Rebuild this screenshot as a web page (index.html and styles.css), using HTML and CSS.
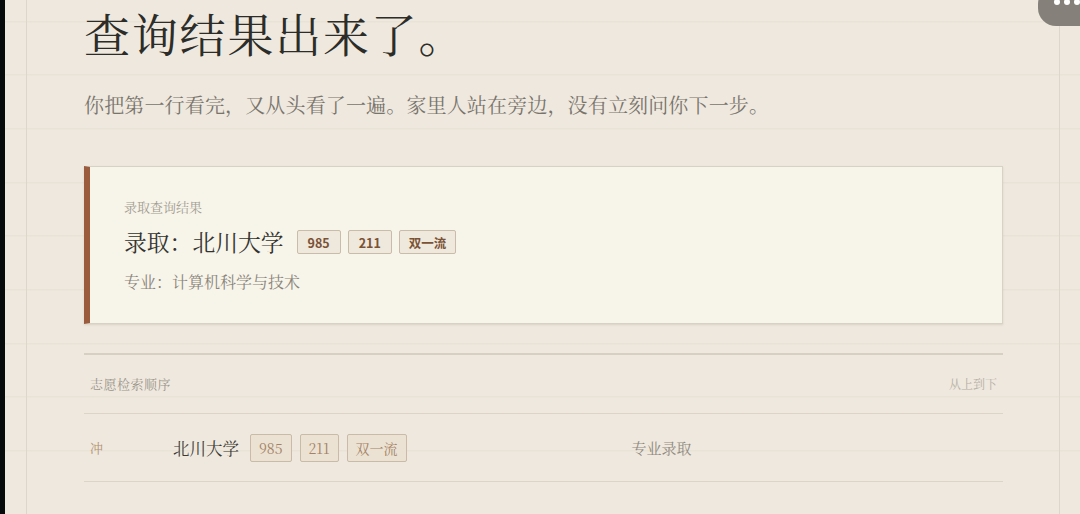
FILE: index.html
```html
<!DOCTYPE html>
<html lang="zh-CN">
<head>
<meta charset="utf-8">
<title>查询结果</title>
<link rel="stylesheet" href="styles.css">
</head>
<body>
<div class="capsule"><span class="dot"></span><span class="dot"></span><span class="dot"></span></div>
<main class="page">
  <h1 class="title">查询结果出来了。</h1>
  <p class="lead">你把第一行看完，又从头看了一遍。家里人站在旁边，没有立刻问你下一步。</p>

  <section class="card">
    <div class="card-label">录取查询结果</div>
    <div class="card-title">
      <span class="card-school">录取：北川大学</span>
      <span class="tag tag-bold">985</span>
      <span class="tag tag-bold">211</span>
      <span class="tag tag-bold">双一流</span>
    </div>
    <div class="card-major">专业：计算机科学与技术</div>
  </section>

  <section class="list">
    <div class="list-head">
      <span class="list-title">志愿检索顺序</span>
      <span class="list-note">从上到下</span>
    </div>
    <div class="list-row">
      <span class="row-level">冲</span>
      <span class="row-school">北川大学</span>
      <span class="tag tag-light">985</span>
      <span class="tag tag-light">211</span>
      <span class="tag tag-light">双一流</span>
      <span class="row-result">专业录取</span>
    </div>
  </section>
</main>
</body>
</html>
```

FILE: styles.css
```css
html, body {
  margin: 0;
  padding: 0;
}
body {
  width: 1080px;
  height: 514px;
  overflow: hidden;
  position: relative;
  font-family: "Noto Serif CJK SC", "Source Han Serif SC", "Noto Sans CJK SC", serif;
  color: #2f2f2a;
  background-color: #efe8de;
  background-image:
    linear-gradient(to right, #060a0a 0, #060a0a 5px, transparent 5px),
    linear-gradient(to right, transparent 26px, #ddd6ca 26px, #ddd6ca 27px, transparent 27px),
    linear-gradient(to right, transparent 1059px, #ddd6ca 1059px, #ddd6ca 1060px, transparent 1060px),
    repeating-linear-gradient(to bottom, transparent 0, transparent 52.67px, #e6dfd3 52.67px, #e6dfd3 53.67px);
  background-position: 0 0, 0 0, 0 0, 0 -31.67px;
}
.capsule {
  position: absolute;
  top: -14px;
  right: -22px;
  width: 64px;
  height: 40px;
  border-radius: 18px;
  background: #85817a;
  display: flex;
  align-items: flex-end;
  gap: 4px;
  padding: 0 0 21px 16px;
  box-sizing: border-box;
}
.capsule .dot {
  width: 6px;
  height: 6px;
  border-radius: 50%;
  background: #ffffff;
}
.page {
  margin-left: 84px;
  width: 919px;
}
.title {
  margin: 0;
  padding-top: 4px;
  font-size: 46px;
  line-height: 56px;
  font-weight: 400;
  color: #2c2d28;
  letter-spacing: 1.8px;
}
.lead {
  margin: 30px 0 0;
  font-size: 20px;
  line-height: 30px;
  color: #78746c;
  letter-spacing: 0.15px;
}
.card {
  margin-top: 46px;
  background: #f7f4ea;
  border: 1px solid #d6d2c6;
  border-left: 6px solid #9b5b3d;
  box-shadow: 0 1px 2px rgba(120, 110, 90, 0.18);
  padding: 30px 0 30px 34px;
}
.card-label {
  font-size: 13px;
  line-height: 20px;
  color: #a29c90;
}
.card-title {
  margin-top: 13px;
  display: flex;
  align-items: center;
  gap: 7px;
  height: 24px;
}
.card-school {
  font-size: 22.8px;
  line-height: 24px;
  color: #33332e;
  margin-right: 6px;
}
.tag {
  display: inline-flex;
  align-items: center;
  justify-content: center;
  box-sizing: border-box;
  border-radius: 2px;
}
.tag-bold {
  height: 24px;
  padding: 0 10px;
  font-family: "Noto Sans CJK SC", "Open Sans", sans-serif;
  font-weight: 700;
  font-size: 12.5px;
  color: #7a5236;
  background: #efe8dc;
  border: 1px solid #cbbca9;
}
.tag-bold:last-child {
  padding: 0 9px;
}
.card-major {
  margin-top: 17px;
  font-size: 16px;
  line-height: 22px;
  color: #8a857b;
}
.list {
  margin-top: 29px;
  border-top: 2px solid #d7cfc2;
}
.list-head {
  display: flex;
  justify-content: space-between;
  align-items: center;
  height: 59px;
  padding: 0 6px 1px;
  box-sizing: border-box;
  border-bottom: 1px solid #dcd4c7;
}
.list-title {
  font-size: 13px;
  color: #9a958a;
  letter-spacing: 0.5px;
}
.list-note {
  font-size: 12px;
  color: #b5b0a5;
}
.list-row {
  display: flex;
  align-items: center;
  height: 67px;
  padding: 0 6px;
  border-bottom: 1px solid #dcd4c7;
  gap: 8px;
}
.row-level {
  width: 75px;
  font-size: 13px;
  color: #b39272;
}
.row-school {
  font-size: 16.5px;
  color: #3a3a34;
  margin-right: 3px;
}
.tag-light {
  height: 28px;
  padding: 0 8px;
  font-size: 14px;
  color: #a58264;
  background: #ebe2d4;
  border: 1px solid #c9bba7;
}
.row-result {
  margin-left: 217px;
  font-size: 15px;
  color: #8f8a80;
}
```
